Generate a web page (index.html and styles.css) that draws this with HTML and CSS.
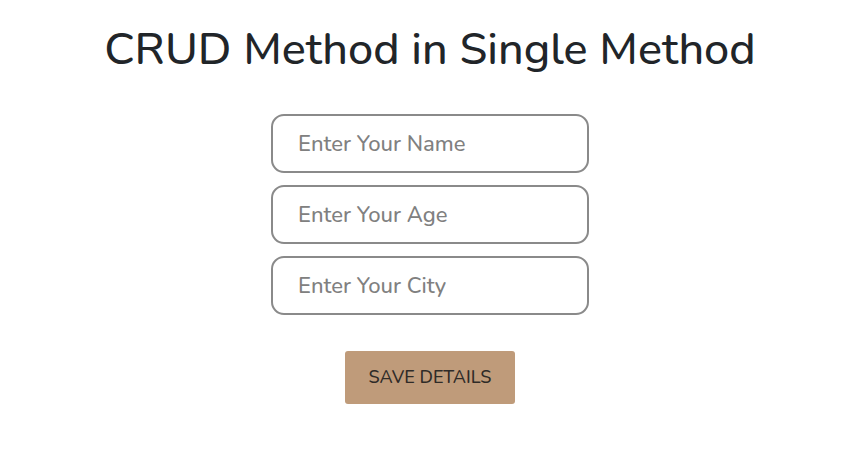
FILE: index.html
```html
<!DOCTYPE html>
<html lang="en">
<head>
<meta charset="utf-8">
<meta name="viewport" content="width=device-width, initial-scale=1">
<title>CRUD Method in Single Method</title>
<link rel="stylesheet" href="styles.css">
</head>
<body>
<main class="page">
  <h1 class="title">CRUD Method in Single Method</h1>
  <form class="form">
    <input class="field" type="text" name="name" placeholder="Enter Your Name" aria-label="Enter Your Name">
    <input class="field" type="text" name="age" placeholder="Enter Your Age" aria-label="Enter Your Age">
    <input class="field" type="text" name="city" placeholder="Enter Your City" aria-label="Enter Your City">
    <button class="save" type="button">SAVE DETAILS</button>
  </form>
</main>
</body>
</html>
```
FILE: styles.css
```css
* {
  box-sizing: border-box;
}

body {
  margin: 0;
  background: #fff;
  color: #212529;
  font-family: Nunito, Lato, sans-serif;
}

.page {
  display: flex;
  flex-direction: column;
  align-items: center;
  padding: 20px 0 24px 7px;
}

.title {
  margin: 0 0 34px;
  font-size: 45px;
  font-weight: 500;
  line-height: 60px;
  text-align: center;
}

.form {
  display: flex;
  flex-direction: column;
  align-items: center;
  gap: 12px;
  width: 100%;
  max-width: 318px;
}

.field {
  width: 100%;
  padding: 13px 25px 11px;
  border: 2px solid #8a8a8a;
  border-radius: 13px;
  background: #fff;
  color: #212529;
  font: inherit;
  font-size: 22px;
  font-weight: 500;
  line-height: 31px;
}

.field::placeholder {
  color: #808080;
  opacity: 1;
}

.save {
  margin-top: 24px;
  padding: 14px 24px;
  border: 0;
  border-radius: 3px;
  background: #bf9b7a;
  color: #2f2b28;
  font: inherit;
  font-size: 18px;
  font-weight: 500;
  line-height: 25px;
}
```
